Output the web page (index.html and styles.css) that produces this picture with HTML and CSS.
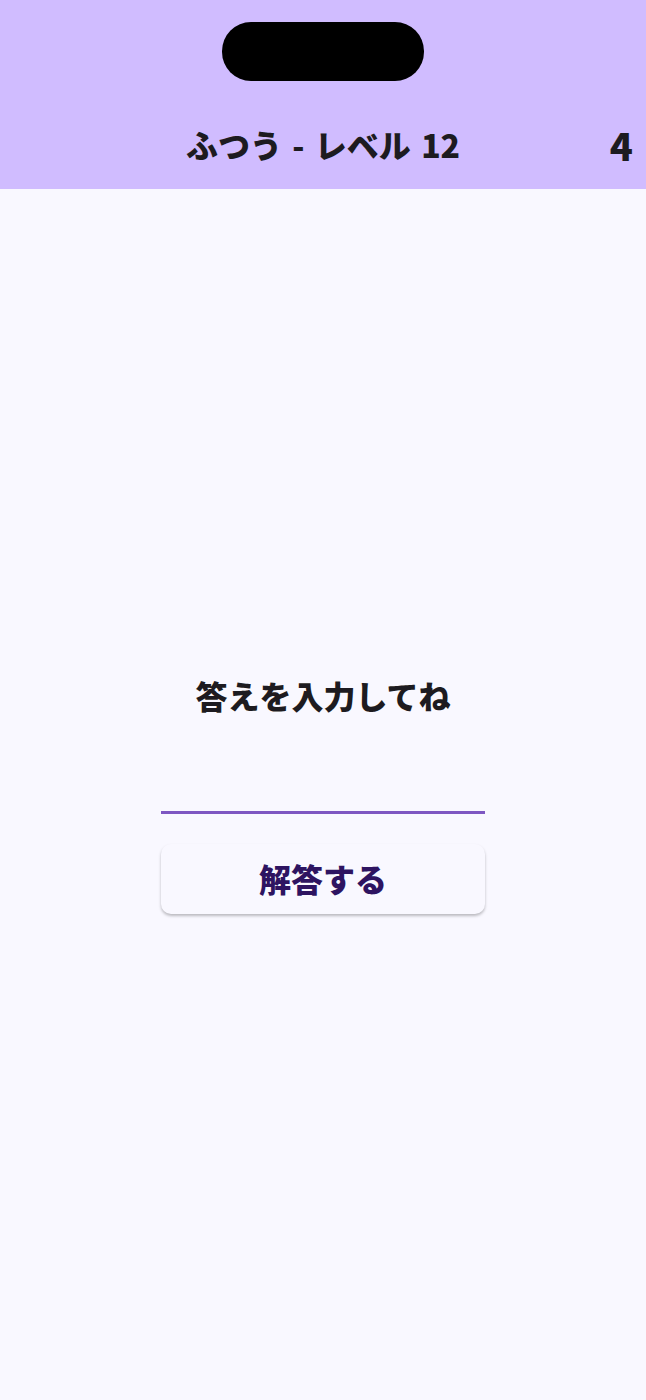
FILE: index.html
```html
<!DOCTYPE html>
<html lang="ja">
<head>
    <meta charset="UTF-8">
    <meta name="viewport" content="width=device-width, initial-scale=1.0">
    <title>ふつう - レベル 12</title>
    <link rel="stylesheet" href="styles.css">
</head>
<body>

    <header class="appbar">
        <div class="notch"></div>
        <div class="titlerow">
            <h1 class="title">ふつう - レベル 12</h1>
            <span class="count">4</span>
        </div>
    </header>

    <main class="content">
        <p class="prompt">答えを入力してね</p>
        <div class="answerline"></div>
        <button class="submit">解答する</button>
    </main>

</body>
</html>
```

FILE: styles.css
```css
*{
    box-sizing: border-box;
}

body{
    margin: 0;
    height: 1400px;
    display: flex;
    flex-direction: column;
    background: #f9f8ff;
    font-family: "Noto Sans CJK JP", "Noto Sans", sans-serif;
    overflow: hidden;
}

.appbar{
    height: 189px;
    padding-top: 22px;
    background: #d0bcff;
    display: flex;
    flex-direction: column;
    align-items: center;
}

.notch{
    width: 202px;
    height: 59px;
    border-radius: 29px;
    background: black;
}

.titlerow{
    width: 100%;
    margin-top: 39px;
    height: 48px;
    padding-right: 13px;
    display: flex;
    align-items: center;
    justify-content: flex-end;
    position: relative;
}

.title{
    position: absolute;
    left: 0;
    right: 0;
    margin: 0;
    text-align: center;
    font-size: 32px;
    font-weight: 900;
    word-spacing: 3px;
    color: #1d1b20;
}

.count{
    font-size: 38px;
    font-weight: 900;
    color: #1d1b20;
}

.content{
    flex: 1;
    padding-top: 484px;
    display: flex;
    flex-direction: column;
    align-items: center;
}

.prompt{
    margin: 0;
    height: 44px;
    line-height: 44px;
    font-size: 32px;
    font-weight: 900;
    color: #1d1b20;
}

.answerline{
    width: 324px;
    height: 3px;
    margin-top: 94px;
    background: #7e57c2;
}

.submit{
    width: 324px;
    height: 70px;
    margin-top: 30px;
    padding: 0 0 2px;
    border: none;
    border-radius: 10px;
    background: #f9f8ff;
    box-shadow: 0 2px 3px rgba(0, 0, 0, 0.25);
    font-family: inherit;
    font-size: 32px;
    font-weight: 900;
    color: #2e1461;
}
```
